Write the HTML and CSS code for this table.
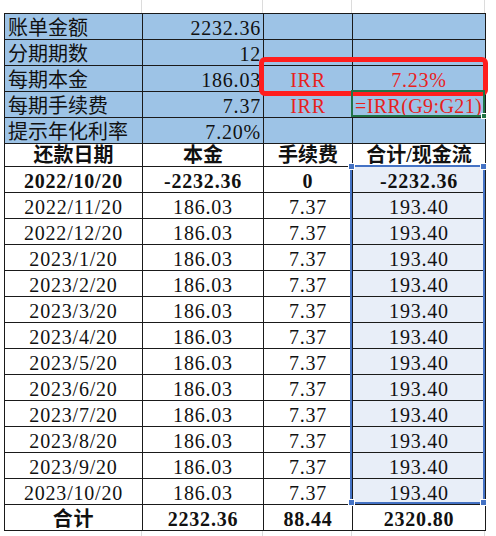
FILE: index.html
```html
<!DOCTYPE html>
<html>
<head>
<meta charset="utf-8">
<link rel="stylesheet" href="styles.css">
</head>
<body>
<div class="sheet">
  <div class="strip strip-top">
    <span class="g c1"></span><span class="g c2"></span><span class="g c3"></span><span class="g c4"></span>
  </div>
  <div class="wrap">
    <table class="t">
      <colgroup><col class="c1"><col class="c2"><col class="c3"><col class="c4"></colgroup>
      <tr class="info"><td class="lbl">账单金额</td><td class="num">2232.36</td><td></td><td></td></tr>
      <tr class="info"><td class="lbl">分期期数</td><td class="num">12</td><td></td><td></td></tr>
      <tr class="info"><td class="lbl">每期本金</td><td class="num">186.03</td><td class="red ctr">IRR</td><td class="red ctr">7.23%</td></tr>
      <tr class="info"><td class="lbl">每期手续费</td><td class="num">7.37</td><td class="red ctr">IRR</td><td class="red formula">=IRR(G9:G21)</td></tr>
      <tr class="info"><td class="lbl">提示年化利率</td><td class="num">7.20%</td><td></td><td></td></tr>
      <tr class="head"><td>还款日期</td><td>本金</td><td>手续费</td><td>合计/现金流</td></tr>
      <tr class="bold"><td>2022/10/20</td><td>-2232.36</td><td>0</td><td class="s">-2232.36</td></tr>
      <tr><td>2022/11/20</td><td>186.03</td><td>7.37</td><td class="s">193.40</td></tr>
      <tr><td>2022/12/20</td><td>186.03</td><td>7.37</td><td class="s">193.40</td></tr>
      <tr><td>2023/1/20</td><td>186.03</td><td>7.37</td><td class="s">193.40</td></tr>
      <tr><td>2023/2/20</td><td>186.03</td><td>7.37</td><td class="s">193.40</td></tr>
      <tr><td>2023/3/20</td><td>186.03</td><td>7.37</td><td class="s">193.40</td></tr>
      <tr><td>2023/4/20</td><td>186.03</td><td>7.37</td><td class="s">193.40</td></tr>
      <tr><td>2023/5/20</td><td>186.03</td><td>7.37</td><td class="s">193.40</td></tr>
      <tr><td>2023/6/20</td><td>186.03</td><td>7.37</td><td class="s">193.40</td></tr>
      <tr><td>2023/7/20</td><td>186.03</td><td>7.37</td><td class="s">193.40</td></tr>
      <tr><td>2023/8/20</td><td>186.03</td><td>7.37</td><td class="s">193.40</td></tr>
      <tr><td>2023/9/20</td><td>186.03</td><td>7.37</td><td class="s">193.40</td></tr>
      <tr><td>2023/10/20</td><td>186.03</td><td>7.37</td><td class="s">193.40</td></tr>
      <tr class="bold total"><td>合计</td><td>2232.36</td><td>88.44</td><td>2320.80</td></tr>
    </table>
    <div class="redbox"></div>
    <div class="active"><i class="ah"></i></div>
    <div class="sel"><i class="h tl"></i><i class="h tr"></i><i class="h bl"></i><i class="h br"></i></div>
  </div>
  <div class="strip strip-bot">
    <span class="g c1"></span><span class="g c2"></span><span class="g c3"></span><span class="g c4"></span>
  </div>
</div>
</body>
</html>
```

FILE: styles.css
```css
html, body {
  margin: 0;
  padding: 0;
  background: #fff;
}
.sheet {
  width: 496px;
  height: 536px;
  overflow: hidden;
  font-family: "Liberation Serif", "Noto Sans CJK SC", serif;
  color: #111;
}
.strip {
  display: flex;
  margin-left: 4px;
}
.strip-top { height: 13px; }
.strip-bot { height: 8px; }
.g {
  box-sizing: border-box;
  border-right: 1px solid #dcdcdc;
  height: 100%;
}
.strip-bot .g { border-bottom: 1px solid #e4e4e4; }
.c1 { width: 138px; }
.c2 { width: 121px; }
.c3 { width: 89px; }
.c4 { width: 133px; }

.wrap {
  position: relative;
  margin-left: 4px;
  width: 482px;
}
.t {
  border-collapse: collapse;
  table-layout: fixed;
  width: 482px;
  font-size: 20px;
}
.t td {
  border: 1px solid #1a1a1a;
  padding: 0 3px 0 3px;
  height: 25px;
  line-height: 22px;
  vertical-align: bottom;
  text-align: center;
  white-space: nowrap;
  overflow: hidden;
  letter-spacing: 0.8px;
}
.t tr { height: 26px; }
.t tr.head { height: 23px; }
.t tr.head td { height: 22px; font-weight: bold; line-height: 22px; letter-spacing: 0; }

.info td { background: #9dc3e6; }
.info td.lbl { text-align: left; padding-left: 3px; letter-spacing: 0; }
.info td.num { text-align: right; padding-right: 2px; }
.info td.ctr { text-align: center; }
.info td.formula { text-align: left; padding-left: 2px; letter-spacing: 0.4px; }
.red { color: #e8211d; }

.bold td { font-weight: bold; }
td.s { background: #e8eef8; }

.redbox {
  position: absolute;
  left: 255px;
  top: 44px;
  width: 229px;
  height: 39px;
  box-sizing: border-box;
  border: 5px solid #ff1e1e;
  border-radius: 6px;
}
.active {
  position: absolute;
  left: 347px;
  top: 77px;
  width: 134px;
  height: 27px;
  box-sizing: border-box;
  border: 2px solid #217346;
}
.ah {
  position: absolute;
  right: -4px;
  bottom: -4px;
  width: 4px;
  height: 4px;
  background: #217346;
  border: 1px solid #fff;
}
.sel {
  position: absolute;
  left: 346px;
  top: 152px;
  width: 135px;
  height: 339px;
  box-sizing: border-box;
  border: 2px solid #4472c4;
}
.h {
  position: absolute;
  width: 5px;
  height: 5px;
  background: #4472c4;
  border: 1px solid #fff;
}
.h.tl { left: -4px; top: -4px; }
.h.tr { right: -4px; top: -4px; }
.h.bl { left: -4px; bottom: -4px; }
.h.br { right: -4px; bottom: -4px; }
```
